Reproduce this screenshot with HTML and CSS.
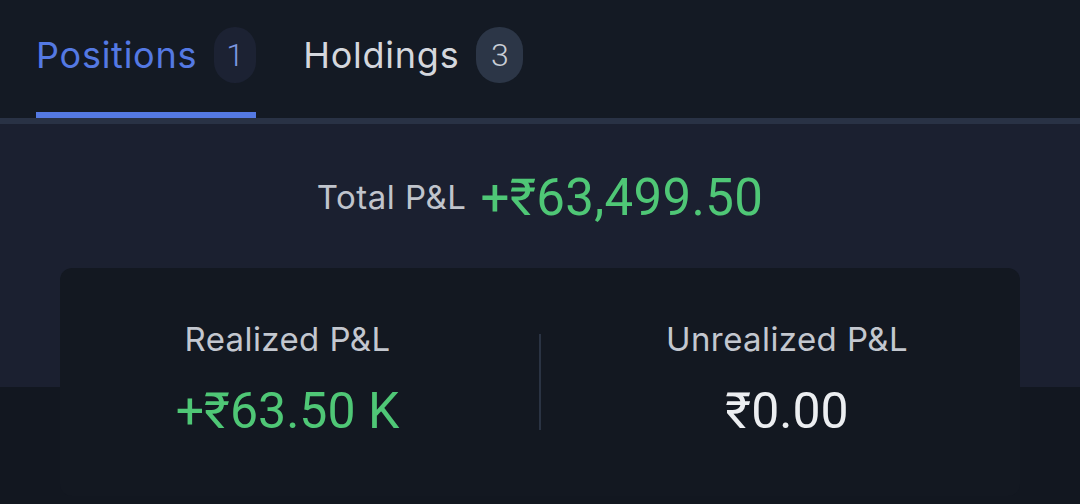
FILE: index.html
```html
<!DOCTYPE html>
<html lang="en">
<head>
    <meta charset="UTF-8">
    <meta name="viewport" content="width=device-width, initial-scale=1.0">
    <title>Portfolio P&amp;L</title>
    <link rel="stylesheet" href="styles.css">
</head>
<body>
    <!-- 顶部标签 -->
    <div class="tabs">
        <a class="tab active" href="javascript:;">
            <span class="tab-name">Positions</span>
            <span class="badge">1</span>
        </a>
        <a class="tab" href="javascript:;">
            <span class="tab-name">Holdings</span>
            <span class="badge">3</span>
        </a>
    </div>

    <!-- 盈亏汇总 -->
    <div class="summary">
        <div class="total">
            <span class="total-label">Total P&amp;L</span>
            <span class="total-value profit">+₹63,499.50</span>
        </div>
        <div class="card">
            <div class="col col-left">
                <div class="col-label">Realized P&amp;L</div>
                <div class="col-value profit">+₹63.50 K</div>
            </div>
            <div class="divider"></div>
            <div class="col col-right">
                <div class="col-label">Unrealized P&amp;L</div>
                <div class="col-value">₹0.00</div>
            </div>
        </div>
    </div>
</body>
</html>
```

FILE: styles.css
```css
* {
    margin: 0;
    padding: 0;
    box-sizing: border-box;
}
body {
    background-color: #121720;
    font-family: Inter, "Noto Sans", sans-serif;
    color: #c3c7cf;
}
a {
    text-decoration: none;
}
/* 标签栏 */
.tabs {
    display: flex;
    gap: 47px;
    padding-left: 36px;
    background-color: #141a24;
    border-bottom: 6px solid #293245;
}
.tab {
    display: flex;
    align-items: center;
    gap: 17px;
    height: 118px;
    padding-bottom: 2px;
    border-bottom: 6px solid transparent;
    color: #d4d7dd;
    font-size: 36px;
    letter-spacing: 0.75px;
}
.tab.active {
    color: #5479e3;
    border-bottom-color: #5479e3;
}
.badge {
    display: flex;
    align-items: center;
    justify-content: center;
    width: 47px;
    height: 56px;
    border-radius: 23px;
    background-color: #2c3647;
    color: #c9ced6;
    font-family: Roboto, sans-serif;
    font-size: 32px;
    font-weight: 300;
    letter-spacing: 0;
}
.tab.active .badge {
    width: 42px;
    background-color: #1c2233;
    color: #7e97e0;
}
/* 汇总区 */
.summary {
    padding: 45px 60px 8px;
    background: linear-gradient(#1b2030 0 263px, #121720 263px);
}
.total {
    display: flex;
    justify-content: center;
    align-items: center;
    gap: 14px;
    height: 56px;
    margin-bottom: 43px;
}
.total-label {
    font-size: 33px;
    letter-spacing: 0.5px;
    color: #c0c4cc;
}
.total-value {
    font-family: Roboto, sans-serif;
    font-size: 51px;
    letter-spacing: 0.3px;
}
.profit {
    color: #4fc776;
}
.card {
    display: flex;
    align-items: center;
    height: 228px;
    padding-bottom: 4px;
    border-radius: 12px;
    background-color: #131821;
}
.col {
    text-align: center;
}
.col-left {
    flex: none;
    width: 479px;
    padding-right: 24px;
}
.col-right {
    flex: 1;
    padding-left: 13px;
}
.col-label {
    font-size: 33px;
    line-height: 40px;
    letter-spacing: 0.4px;
    color: #c3c7cf;
    margin-bottom: 22px;
}
.col-value {
    font-family: Roboto, sans-serif;
    font-size: 50px;
    line-height: 60px;
    color: #eceef1;
}
.col-value.profit {
    color: #4fc776;
}
.divider {
    width: 2px;
    height: 96px;
    margin-top: 4px;
    background-color: #2a3343;
}
```
